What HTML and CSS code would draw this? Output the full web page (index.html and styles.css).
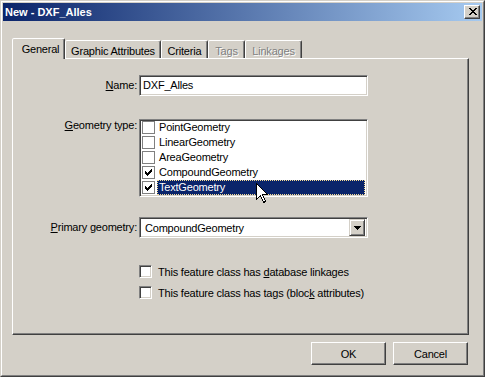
FILE: index.html
```html
<!DOCTYPE html>
<html lang="en">

<head>
    <meta charset="UTF-8">
    <meta name="viewport" content="width=device-width, initial-scale=1.0">
    <title>New - DXF_Alles</title>
    <link rel="stylesheet" href="styles.css">
</head>

<body>
    <div class="window">
        <div class="frame">
            <div class="titlebar">
                <span class="title">New - DXF_Alles</span>
                <button class="caption-btn" title="Close">
                    <svg width="8" height="7" viewBox="0 0 8 7" shape-rendering="crispEdges">
                        <path fill="#000" d="M0 0h2v1h-2z M6 0h2v1h-2z M1 1h2v1h-2z M5 1h2v1h-2z M2 2h4v1h-4z M3 3h2v1h-2z M2 4h4v1h-4z M1 5h2v1h-2z M5 5h2v1h-2z M0 6h2v1h-2z M6 6h2v1h-2z" />
                    </svg>
                </button>
            </div>

            <div class="body">
                <div class="tabs">
                    <div class="tab active tab-general">General</div>
                    <div class="tab tab-graphic">Graphic Attributes</div>
                    <div class="tab tab-criteria">Criteria</div>
                    <div class="tab disabled tab-tags">Tags</div>
                    <div class="tab disabled tab-linkages">Linkages</div>
                </div>

                <div class="panel">
                    <div class="field field-name">
                        <label class="field-label"><u>N</u>ame:</label>
                        <div class="edit">DXF_Alles</div>
                    </div>

                    <div class="field field-top field-geom">
                        <label class="field-label"><u>G</u>eometry type:</label>
                        <div class="listbox">
                            <div class="list-item"><span class="list-check"></span><span class="list-text">PointGeometry</span></div>
                            <div class="list-item"><span class="list-check"></span><span class="list-text">LinearGeometry</span></div>
                            <div class="list-item"><span class="list-check"></span><span class="list-text">AreaGeometry</span></div>
                            <div class="list-item"><span class="list-check checked"></span><span class="list-text">CompoundGeometry</span></div>
                            <div class="list-item selected"><span class="list-check checked"></span><span class="list-text">TextGeometry</span></div>
                        </div>
                    </div>

                    <div class="field field-primary">
                        <label class="field-label"><u>P</u>rimary geometry:</label>
                        <div class="combo">
                            <span class="combo-text">CompoundGeometry</span>
                            <span class="combo-btn">
                                <svg width="7" height="4" viewBox="0 0 7 4" shape-rendering="crispEdges">
                                    <path fill="#000" d="M0 0h7v1h-7z M1 1h5v1h-5z M2 2h3v1h-3z M3 3h1v1h-1z" />
                                </svg>
                            </span>
                        </div>
                    </div>

                    <div class="options">
                        <div class="option"><span class="checkbox"></span><span>This feature class has <u>d</u>atabase linkages</span></div>
                        <div class="option"><span class="checkbox"></span><span>This feature class has tags (bloc<u>k</u> attributes)</span></div>
                    </div>
                </div>

                <div class="buttons">
                    <button class="btn">OK</button>
                    <button class="btn">Cancel</button>
                </div>
            </div>
        </div>

        <!-- mouse pointer over the selected row -->
        <svg class="cursor" width="13" height="21" viewBox="0 0 13 21" shape-rendering="crispEdges">
            <path fill="#fff" stroke="#000" stroke-width="1" d="M0.5 0.5V16.5L4.5 12.5L7.5 19.5L9.5 18.5L6.5 11.5H11.5Z" />
        </svg>
    </div>
</body>

</html>
```

FILE: styles.css
```css
body {
    margin: 0;
    font-family: "Liberation Sans", Arial, sans-serif;
    font-size: 11px;
    color: #000;
}

.window {
    position: relative;
    width: 485px;
    height: 377px;
    box-sizing: border-box;
    border: 1px solid;
    border-color: #d4d0c8 #404040 #404040 #d4d0c8;
    background-color: #d4d0c8;
}

.frame {
    height: 100%;
    box-sizing: border-box;
    border: 1px solid;
    border-color: #fff #808080 #808080 #fff;
    padding: 1px;
    display: flex;
    flex-direction: column;
}

.titlebar {
    height: 18px;
    flex: none;
    display: flex;
    align-items: center;
    justify-content: space-between;
    padding: 0 2px;
    background: linear-gradient(to right, #0a246a, #a6caf0);
}

.title {
    color: #fff;
    font-weight: bold;
    line-height: 18px;
}

.caption-btn {
    width: 16px;
    height: 14px;
    padding: 0;
    display: flex;
    align-items: center;
    justify-content: center;
    box-sizing: border-box;
    border: 1px solid;
    border-color: #fff #404040 #404040 #fff;
    box-shadow: inset -1px -1px #808080;
    background-color: #d4d0c8;
}

.caption-btn svg {
    margin-left: 1px;
    margin-top: -1px;
}

.body {
    flex: 1;
    padding: 17px 13px 0 9px;
    letter-spacing: -0.2px;
}

/* tab strip */
.tabs {
    position: relative;
    z-index: 1;
    display: flex;
    align-items: flex-end;
    height: 20px;
    padding-left: 2px;
}

.tab {
    height: 18px;
    box-sizing: border-box;
    padding-top: 4px;
    line-height: 13px;
    text-align: center;
    border: 1px solid;
    border-bottom: none;
    border-color: #fff #404040 transparent #fff;
    border-radius: 2px 2px 0 0;
    box-shadow: inset -1px 0 #808080;
    background-color: #d4d0c8;
    white-space: nowrap;
}

.tab.active {
    height: 21px;
    margin-left: -2px;
    margin-bottom: -1px;
    padding-left: 4px;
}

.tab.disabled {
    color: #808080;
    text-shadow: 1px 1px 0 #fff;
}

.tab-general { width: 53px; }
.tab-graphic { width: 96px; }
.tab-criteria { width: 47px; }
.tab-tags { width: 37px; }
.tab-linkages { width: 57px; }

.panel {
    width: 457px;
    height: 277px;
    box-sizing: border-box;
    border: 1px solid;
    border-color: #fff #404040 #404040 #fff;
    box-shadow: inset -1px -1px #808080;
    padding-top: 16px;
}

/* form rows */
.field {
    display: flex;
    align-items: center;
}

.field-top {
    align-items: flex-start;
}

.field-geom {
    margin-top: 23px;
}

.field-primary {
    margin-top: 20px;
}

.field-label {
    width: 126px;
    box-sizing: border-box;
    padding-right: 2px;
    text-align: right;
    line-height: 13px;
}

.edit,
.combo,
.listbox {
    width: 229px;
    box-sizing: border-box;
    border: 1px solid;
    border-color: #808080 #fff #fff #808080;
    box-shadow: inset 1px 1px #404040, inset -1px -1px #d4d0c8;
    background-color: #fff;
}

.edit {
    height: 21px;
    padding: 0 3px;
    line-height: 19px;
}

.listbox {
    height: 78px;
    padding: 0 2px 0 1px;
    overflow: hidden;
}

.list-item {
    display: flex;
    align-items: center;
    height: 15px;
}

.list-check {
    width: 13px;
    height: 13px;
    box-sizing: border-box;
    margin: 0 1px;
    border: 1px solid #808080;
    background-color: #fff;
}

.list-check.checked {
    background: #fff url("data:image/svg+xml,%3Csvg xmlns='http://www.w3.org/2000/svg' width='7' height='7' shape-rendering='crispEdges'%3E%3Cpath d='M6 0h1v1h-1z M5 1h2v1h-2z M0 2h1v1h-1z M4 2h3v1h-3z M0 3h2v1h-2z M3 3h3v1h-3z M0 4h5v1h-5z M1 5h3v1h-3z M2 6h1v1h-1z'/%3E%3C/svg%3E") no-repeat 2px 2px;
}

.list-text {
    flex: 1;
    height: 15px;
    box-sizing: border-box;
    margin-left: 1px;
    padding-left: 2px;
    line-height: 15px;
}

.selected .list-text {
    background-color: #0a246a;
    color: #fff;
    border: 1px dotted #f5db95;
    padding-left: 1px;
    line-height: 13px;
}

.combo {
    height: 21px;
    display: flex;
    align-items: center;
    justify-content: space-between;
    padding: 2px;
}

.combo-text {
    padding-left: 3px;
}

.combo-btn {
    width: 16px;
    height: 17px;
    box-sizing: border-box;
    display: flex;
    align-items: center;
    justify-content: center;
    border: 1px solid;
    border-color: #d4d0c8 #404040 #404040 #d4d0c8;
    box-shadow: inset 1px 1px #fff, inset -1px -1px #808080;
    background-color: #d4d0c8;
}

.options {
    margin: 27px 0 0 126px;
    display: flex;
    flex-direction: column;
    gap: 8px;
}

.option {
    display: flex;
    align-items: center;
    gap: 6px;
    height: 13px;
}

.checkbox {
    width: 13px;
    height: 13px;
    box-sizing: border-box;
    border: 1px solid;
    border-color: #808080 #fff #fff #808080;
    box-shadow: inset 1px 1px #404040, inset -1px -1px #d4d0c8;
    background-color: #fff;
}

/* dialog buttons */
.buttons {
    display: flex;
    justify-content: flex-end;
    gap: 7px;
    margin-top: 7px;
    padding-right: 1px;
}

.btn {
    width: 75px;
    height: 23px;
    padding: 0;
    font: inherit;
    letter-spacing: inherit;
    color: #000;
    border: 1px solid;
    border-color: #fff #404040 #404040 #fff;
    box-shadow: inset -1px -1px #808080;
    background-color: #d4d0c8;
}

.cursor {
    position: absolute;
    left: 255px;
    top: 182px;
}
```
